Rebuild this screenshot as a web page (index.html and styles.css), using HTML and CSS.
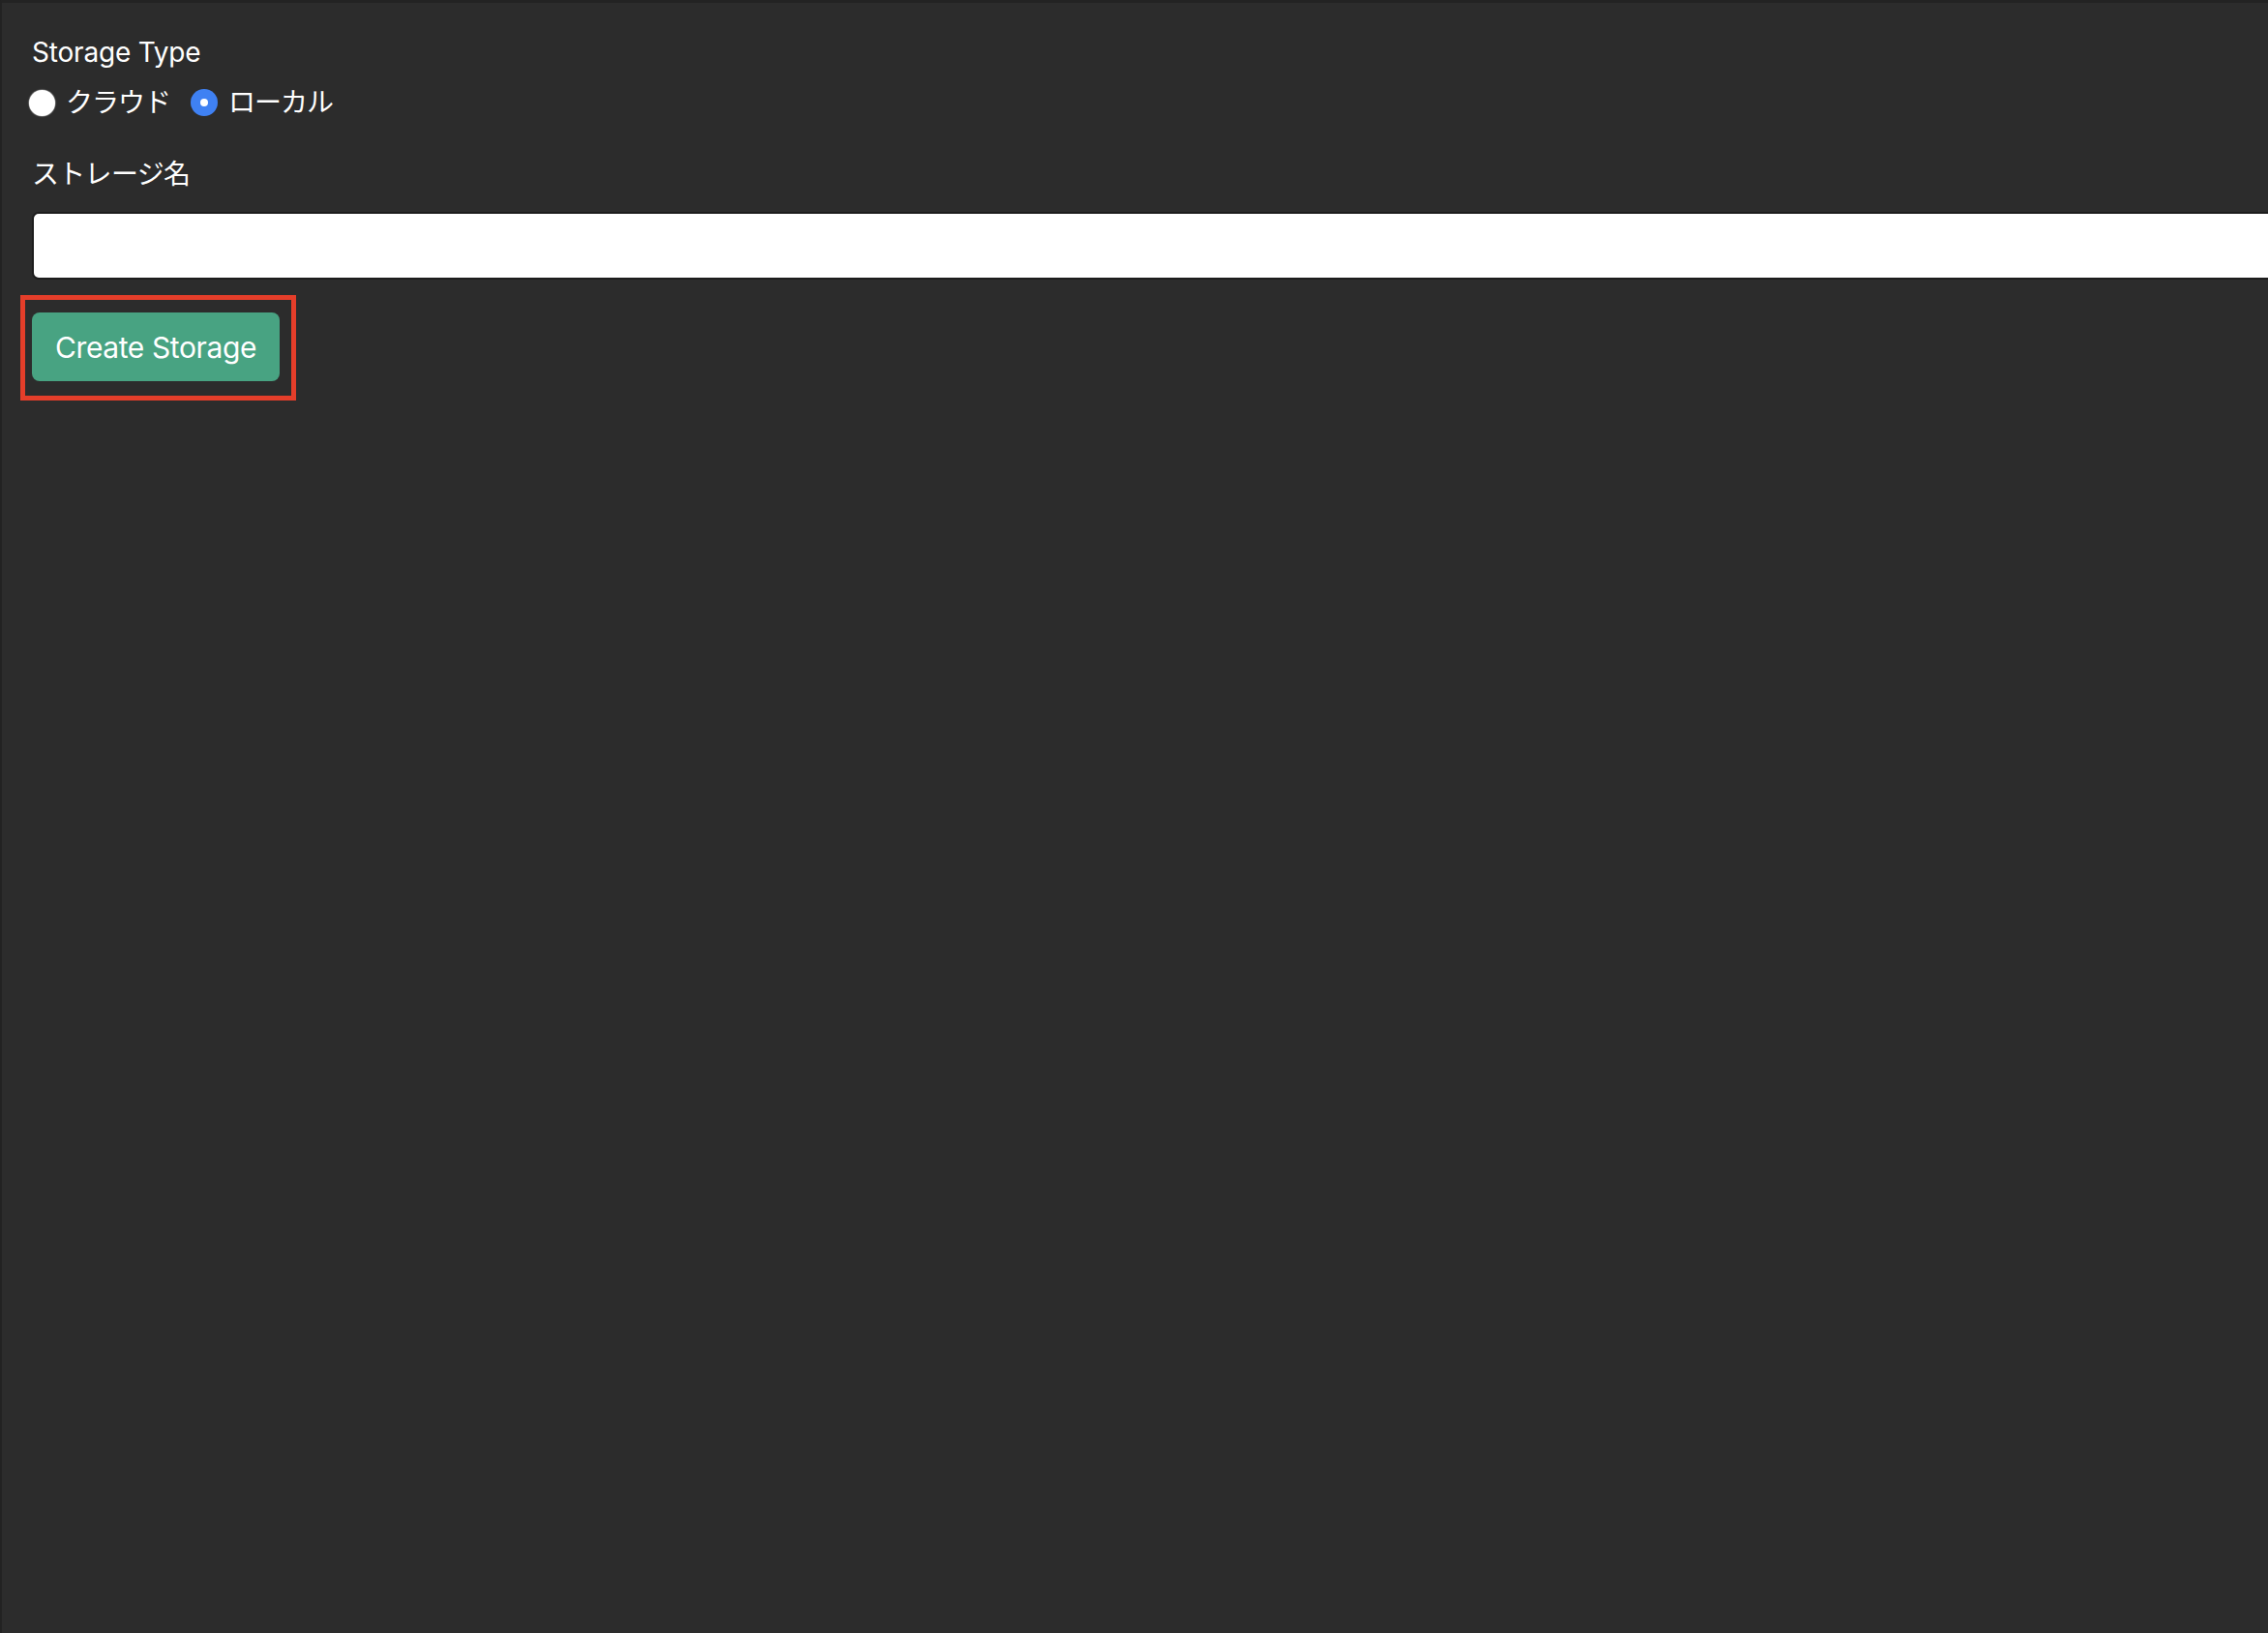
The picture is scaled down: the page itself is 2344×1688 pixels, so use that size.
FILE: index.html
```html
<!DOCTYPE html>
<html lang="ja">
<head>
<meta charset="utf-8">
<title>Create Storage</title>
<link rel="stylesheet" href="styles.css">
</head>
<body>
<div class="page">
  <form class="form">
    <div class="field">
      <div class="label">Storage Type</div>
      <div class="radios">
        <label class="radio"><span class="dot"></span><span class="radio-text">クラウド</span></label>
        <label class="radio"><span class="dot checked"></span><span class="radio-text">ローカル</span></label>
      </div>
    </div>
    <div class="field">
      <label class="label name-label">ストレージ名</label>
      <input class="text-input" type="text">
    </div>
    <div class="actions">
      <span class="btn-wrap">
        <button type="button" class="btn">Create Storage</button>
        <span class="highlight"></span>
      </span>
    </div>
  </form>
</div>
</body>
</html>
```

FILE: styles.css
```css
html, body {
  margin: 0;
  padding: 0;
  height: 100%;
  overflow: hidden;
  background: #2b2b2b;
}

.page {
  box-sizing: border-box;
  height: 100vh;
  background: #2c2c2c;
  border-top: 3px solid #232323;
  border-left: 2px solid #222222;
  padding: 31px 0 0 31px;
  font-family: "Inter", "Noto Sans CJK JP", sans-serif;
  color: #ffffff;
}

.form {
  display: flex;
  flex-direction: column;
}

.field {
  display: flex;
  flex-direction: column;
}

.label {
  font-size: 28px;
  line-height: 40px;
  letter-spacing: -0.2px;
}

.radios {
  display: flex;
  align-items: center;
  gap: 21px;
  margin-top: 12px;
  margin-left: -3px;
  height: 40px;
}

.radio {
  display: flex;
  align-items: center;
  gap: 11px;
  font-size: 28px;
  line-height: 40px;
}

.radio-text {
  letter-spacing: -1px;
}

.dot {
  box-sizing: border-box;
  width: 27px;
  height: 27px;
  border-radius: 50%;
  background: #ffffff;
  box-shadow: 0 0 1px 0.5px rgba(255, 255, 255, 0.5);
  display: flex;
  align-items: center;
  justify-content: center;
}

.dot.checked {
  width: 28px;
  height: 28px;
  background: #3f81f3;
  box-shadow: none;
}

.dot.checked::after {
  content: "";
  width: 8px;
  height: 8px;
  border-radius: 50%;
  background: #ffffff;
}

.name-label {
  margin-top: 34px;
  letter-spacing: -0.7px;
}

.text-input {
  box-sizing: border-box;
  margin-top: 19px;
  width: 100vw;
  height: 70px;
  border: 2px solid #1d1d1d;
  border-radius: 7px;
  background: #ffffff;
  font-family: "Inter", "Noto Sans CJK JP", sans-serif;
  font-size: 28px;
  padding: 0 16px;
  outline: none;
}

.actions {
  display: flex;
  margin-top: 34px;
}

.btn-wrap {
  position: relative;
  display: inline-flex;
}

.btn {
  box-sizing: border-box;
  height: 71px;
  width: 256px;
  padding: 0 20px;
  border: none;
  border-radius: 8px;
  background: #48a382;
  color: #ffffff;
  font-family: "Inter", sans-serif;
  font-size: 30px;
  letter-spacing: -0.4px;
  cursor: pointer;
}

.highlight {
  position: absolute;
  left: -12px;
  top: -18px;
  width: 285px;
  height: 109px;
  box-sizing: border-box;
  border: 5px solid #e53e2a;
  pointer-events: none;
}
```
